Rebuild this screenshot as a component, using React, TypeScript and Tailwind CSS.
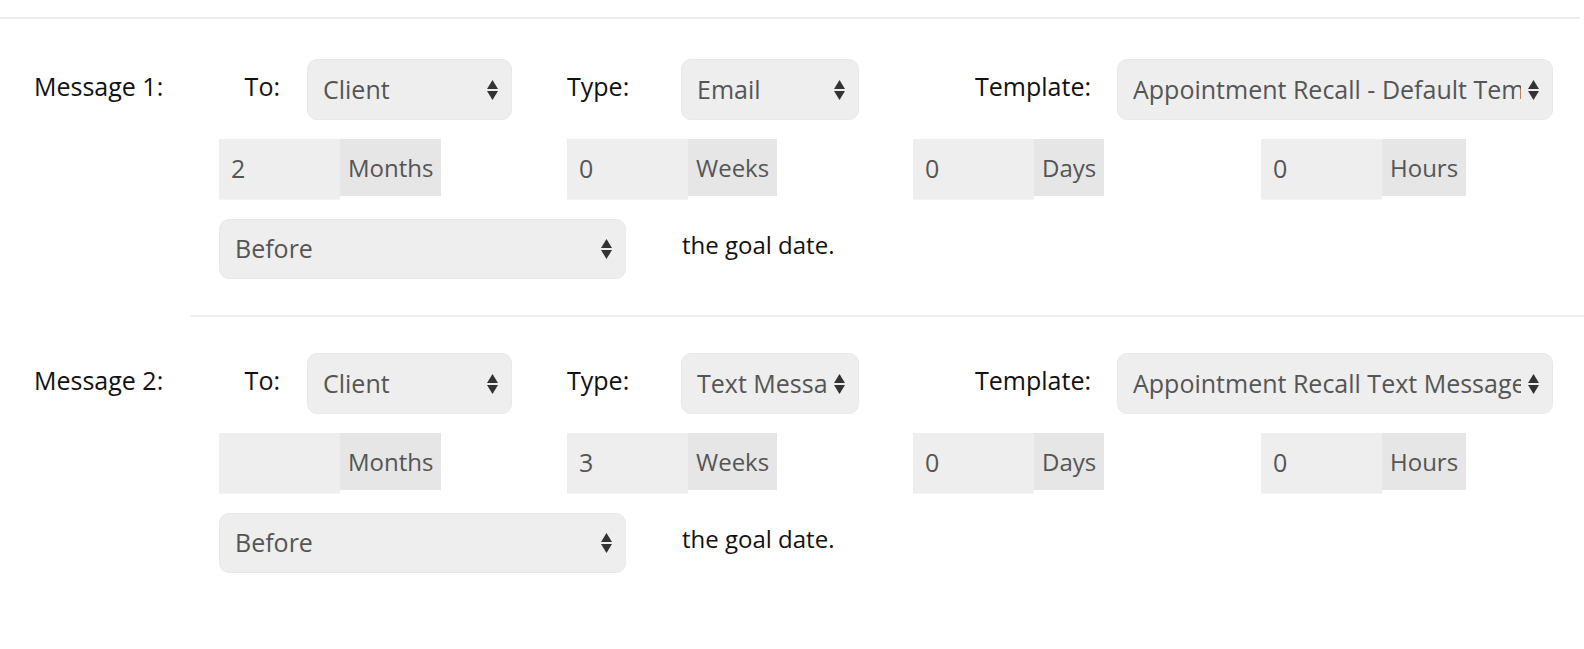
import React from 'react';

interface Interval {
  value: string;
  unit: string;
}

interface Message {
  id: number;
  to: string;
  type: string;
  template: string;
  intervals: Interval[];
  relation: string;
}

const messages: Message[] = [
  {
    id: 1,
    to: 'Client',
    type: 'Email',
    template: 'Appointment Recall - Default Template',
    intervals: [
      { value: '2', unit: 'Months' },
      { value: '0', unit: 'Weeks' },
      { value: '0', unit: 'Days' },
      { value: '0', unit: 'Hours' },
    ],
    relation: 'Before',
  },
  {
    id: 2,
    to: 'Client',
    type: 'Text Message',
    template: 'Appointment Recall Text Message',
    intervals: [
      { value: '', unit: 'Months' },
      { value: '3', unit: 'Weeks' },
      { value: '0', unit: 'Days' },
      { value: '0', unit: 'Hours' },
    ],
    relation: 'Before',
  },
];

const Arrows: React.FC = () => (
  <svg width="11" height="21" viewBox="0 0 11 21" className="absolute right-[13px] top-1/2 -translate-y-1/2">
    <path d="M5.5 0.5 L11 9.5 L0 9.5 Z" fill="#333" />
    <path d="M0 11.5 L11 11.5 L5.5 20.5 Z" fill="#333" />
  </svg>
);

const Select: React.FC<{ value: string; className: string }> = ({ value, className }) => (
  <div
    className={`relative flex items-center rounded-[10px] bg-[#eeeeee] border border-[#e9e9e9] pl-[15px] pr-[31px] text-[#555] ${className}`}
  >
    <span className="whitespace-nowrap overflow-hidden">{value}</span>
    <Arrows />
  </div>
);

const IntervalInput: React.FC<Interval> = ({ value, unit }) => (
  <div className="flex items-start">
    <div className="w-[121px] h-[61px] bg-[#eeeeee] border-b border-[#f4f4f4] flex items-center pl-[12px] text-[#555]">
      {value}
    </div>
    <div className="h-[57px] bg-[#e6e6e6] flex items-center px-[8px] text-[24px] text-[#555]">{unit}</div>
  </div>
);

const MessageBlock: React.FC<{ message: Message }> = ({ message }) => (
  <div className="flex">
    <div className="w-[219px] pl-[34px] pt-[10px] leading-[34px] text-[#111]">
      Message {message.id}:
    </div>
    <div className="flex flex-col gap-[19px]">
      <div className="flex items-start h-[61px]">
        <div className="w-[88px] pr-[27px] pt-[10px] leading-[34px] text-right text-[#111]">To:</div>
        <Select value={message.to} className="w-[205px] h-[61px]" />
        <div className="ml-[55px] w-[114px] pt-[10px] leading-[34px] text-[#111]">Type:</div>
        <Select value={message.type} className="w-[178px] h-[61px]" />
        <div className="w-[258px] pr-[26px] pt-[10px] leading-[34px] text-right text-[#111]">Template:</div>
        <Select value={message.template} className="w-[436px] h-[61px]" />
      </div>
      <div className="grid grid-cols-[348px_346px_348px_auto]">
        {message.intervals.map((interval) => (
          <IntervalInput key={interval.unit} {...interval} />
        ))}
      </div>
      <div className="flex items-center">
        <Select value={message.relation} className="w-[407px] h-[60px]" />
        <div className="ml-[56px] pb-[8px] text-[24px] text-[#111]">the goal date.</div>
      </div>
    </div>
  </div>
);

const App: React.FC = () => {
  return (
    <div className="min-h-[649px] bg-white pt-[17px] text-[25px] font-['Open_Sans',sans-serif]">
      <div className="w-[1580px] h-[2px] bg-[#eeeeee]" />
      <div className="pt-[40px]">
        <MessageBlock message={messages[0]} />
      </div>
      <div className="ml-[190px] mt-[36px] h-[2px] bg-[#eeeeee]" />
      <div className="pt-[36px]">
        <MessageBlock message={messages[1]} />
      </div>
    </div>
  );
};

export default App;
